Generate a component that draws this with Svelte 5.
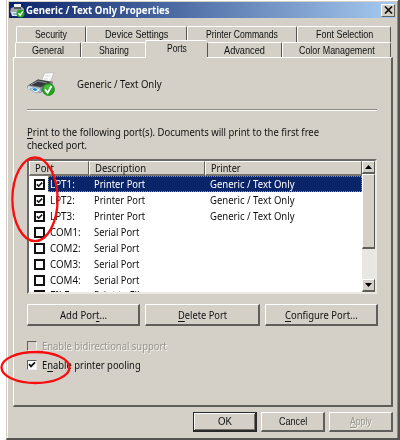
<script>
  const backTabs = [
    { label: 'Security', w: 32, size: 70 },
    { label: 'Device Settings', w: 63, size: 101 },
    { label: 'Printer Commands', w: 72, size: 110 },
    { label: 'Font Selection', w: 57, size: 94 }
  ];
  const frontTabs = [
    { label: 'General', w: 32, size: 66 },
    { label: 'Sharing', w: 30, size: 64 },
    { label: 'Ports', w: 20, size: 62, active: true },
    { label: 'Advanced', w: 41, size: 75 },
    { label: 'Color Management', w: 76, size: 109 }
  ];
  const ports = [
    { name: 'LPT1:', nw: 25, desc: 'Printer Port', dw: 51, printer: 'Generic / Text Only', on: true, selected: true },
    { name: 'LPT2:', nw: 25, desc: 'Printer Port', dw: 51, printer: 'Generic / Text Only', on: true },
    { name: 'LPT3:', nw: 25, desc: 'Printer Port', dw: 51, printer: 'Generic / Text Only', on: true },
    { name: 'COM1:', nw: 31, desc: 'Serial Port', dw: 45 },
    { name: 'COM2:', nw: 31, desc: 'Serial Port', dw: 45 },
    { name: 'COM3:', nw: 31, desc: 'Serial Port', dw: 45 },
    { name: 'COM4:', nw: 31, desc: 'Serial Port', dw: 45 },
    { name: 'FILE:', nw: 22, desc: 'Print to File', dw: 51 }
  ];

  function fit(node, width) {
    node.style.transform = `scaleX(${width / node.offsetWidth})`;
  }
</script>

{#snippet label(text, w, key = -1)}
  <span class="label" style:width="{w}px"><span class="run" use:fit={w}>{#if key >= 0}{text.slice(0, key)}<u>{text[key]}</u>{text.slice(key + 1)}{:else}{text}{/if}</span></span>
{/snippet}

{#snippet printer(size)}
  <svg class="printer" width={size} height={size * 24 / 28} viewBox="0 0 28 24" preserveAspectRatio="none">
    <path d="M14 10 L17.5 1 L27 .5 L23 11Z" fill="#f8f8f7" stroke="#b6b5b3" stroke-width=".7" />
    <path d="M18 4h5M17 7h4" stroke="#deddda" />
    <path d="M0 14 L11 7.5 L26 9.5 L25 16 L13 21 L1 17Z" fill="#85868a" />
    <path d="M2 13 L11 7.5 L24 10 L14 15Z" fill="#34373c" />
    <path d="M4 12.8 L11 9 L20 11" stroke="#96999d" fill="none" />
    <path d="M1 14 L13 16 L14 20 L1 17Z" fill="#d7dce1" />
    <path d="M3 17 L8 15 L14 18 L9 21Z" fill="#edf7ff" stroke="#6288a3" stroke-width=".6" />
    <path d="M5 17l3-1 3 2-3 1z" fill="#1a80c9" />
    <circle cx="21.5" cy="17.5" r="6" fill="#20a51d" stroke="#168313" stroke-width=".7" />
    <path d="M17 15a5 4 0 0 1 9 0Q21 17 17 18Z" fill="#62c957" opacity=".65" />
    <path d="M18 17.3l2.6 3.4 4-6.6" fill="none" stroke="#fff" stroke-width="2" />
  </svg>
{/snippet}

{#snippet miniPrinter()}
  <svg width="15" height="15" viewBox="0 0 15 15">
    <path d="M4 1h7v5H4z" fill="#f2f3f5" />
    <path d="M1 5l3-1h8l2 2v5H2L0 9z" fill="#a5a9ad" />
    <path d="M4 4h7v2H4z" fill="#53575d" />
    <path d="M1 9h8l-1 4H2z" fill="#dce4ec" />
    <path d="M3 11h4" stroke="#478bbd" />
    <circle cx="10.5" cy="10.5" r="4" fill="#20a51d" />
    <path d="M8.4 10.3l1.8 2 2.6-4" fill="none" stroke="#fff" stroke-width="1.4" />
  </svg>
{/snippet}

{#snippet tick()}
  <svg width="8" height="8" viewBox="0 0 8 8"><path d="M1 3.2l2 2.2L7 1.3" fill="none" stroke="#111" stroke-width="1.8" /></svg>
{/snippet}

<main>
  <div class="window">
    <header>
      <span class="mini">{@render miniPrinter()}</span>
      <div class="title">{@render label('Generic / Text Only Properties', 144)}</div>
      <button class="close" aria-label="Close"><svg width="9" height="8" viewBox="0 0 9 8"><path d="M1 .5l7 7M8 .5l-7 7" stroke="#111" stroke-width="1.7" /></svg></button>
    </header>

    <div class="tabs back">
      {#each backTabs as t}<div class="tab" style:width="{t.size}px">{@render label(t.label, t.w)}</div>{/each}
    </div>
    <div class="tabs front">
      {#each frontTabs as t}<div class="tab" class:active={t.active} style:width="{t.size}px">{@render label(t.label, t.w)}</div>{/each}
    </div>

    <section class="page">
      <div class="identity">{@render printer(28)}<div>{@render label('Generic / Text Only', 85)}</div></div>
      <div class="rule"></div>
      <div class="intro">
        <div>{@render label('Print to the following port(s). Documents will print to the first free', 292, 0)}</div>
        <div>{@render label('checked port.', 60)}</div>
      </div>

      <div class="list">
        <div class="content">
          <div class="head">
            <div class="c1">{@render label('Port', 19)}</div>
            <div class="c2">{@render label('Description', 51)}</div>
            <div class="c3">{@render label('Printer', 30)}</div>
          </div>
          {#each ports as p}
            <div class="row">
              <div class="check">{#if p.on}{@render tick()}{/if}</div>
              <div class="cells" class:selected={p.selected}>
                <div class="name">{@render label(p.name, p.nw)}</div>
                <div class="desc">{@render label(p.desc, p.dw)}</div>
                {#if p.printer}<div>{@render label(p.printer, 85)}</div>{/if}
              </div>
            </div>
          {/each}
        </div>
        <div class="scroll">
          <div class="arrow"><svg width="7" height="4"><path d="M0 4L3.5 0 7 4Z" /></svg></div>
          <div class="thumb"></div>
          <div class="track"></div>
          <div class="arrow"><svg width="7" height="4"><path d="M0 0H7L3.5 4Z" /></svg></div>
        </div>
      </div>

      <div class="actions">
        <button style:width="113px">{@render label('Add Port...', 47, 7)}</button>
        <button style:width="115px">{@render label('Delete Port', 49, 0)}</button>
        <button style:width="113px">{@render label('Configure Port...', 73, 0)}</button>
      </div>

      <div class="option disabled"><i></i>{@render label('Enable bidirectional support', 125, 0)}</div>
      <div class="option"><i>{@render tick()}</i>{@render label('Enable printer pooling', 99, 1)}</div>
    </section>

    <footer>
      <button class="default">{@render label('OK', 14)}</button>
      <button>{@render label('Cancel', 28)}</button>
      <button class="disabled">{@render label('Apply', 22, 0)}</button>
    </footer>
  </div>

  <svg class="marks" width="400" height="440" viewBox="0 0 400 440">
    <ellipse cx="35" cy="199.3" rx="22.6" ry="41.8" />
    <ellipse cx="35.5" cy="367.5" rx="34" ry="15.5" />
  </svg>
</main>

<style>
  :global(body) { margin: 0; background: #fff; }
  * { box-sizing: border-box; }
  main { position: relative; width: 400px; height: 440px; padding-left: 6px; overflow: hidden; font: 11px/14px "Noto Sans", "Open Sans", sans-serif; color: #111; }
  .window { width: 394px; height: 440px; background: #d4d0c8; border-left: 1px solid #d4d0c8; border-right: 2px solid #55534f; border-bottom: 2px solid #55534f; padding-top: 2px; box-shadow: inset 1px 1px #fff, inset -1px 0 #8c8983; }
  .label { display: inline-block; flex: none; white-space: nowrap; vertical-align: top; }
  .run { display: inline-block; transform-origin: left; }
  u { text-decoration-thickness: 1px; text-underline-offset: 1.5px; }
  header { height: 16px; margin: 0 2px 0 2px; display: flex; align-items: center; background: linear-gradient(90deg, #0a246a, #a6caf0); color: white; font-weight: bold; font-size: 11px; }
  .mini { display: flex; padding-left: 1px; width: 17px; }
  .title { flex: 1; }
  button { display: flex; align-items: center; justify-content: center; font: inherit; color: inherit; padding: 0; background: #d4d0c8; border: 1px solid #fff; border-right: 2px solid #605e5b; border-bottom: 2px solid #605e5b; }
  .close { width: 14px; height: 13px; margin-right: 1px; border-right-width: 1px; border-bottom-width: 1px; }
  .tabs { display: flex; margin-left: 9px; font: 11px/13px "Liberation Sans", sans-serif; }
  .back { margin-top: 8px; height: 16px; }
  .front { height: 15px; margin-left: 8px; }
  .tab { flex: none; display: flex; justify-content: center; padding-top: 1px; border-top: 1px solid #fff; border-left: 1px solid #fff; border-right: 1.5px solid #575552; border-radius: 2px 2px 0 0; }
  .front .tab:nth-child(2), .tab.active { border-right: 0; }
  .tab.active + .tab { border-left: 1px solid #575552; }
  .tab.active { height: 18px; margin-top: -2px; background: #d4d0c8; position: relative; z-index: 1; }
  .page { width: 380px; height: 350px; margin-left: 6px; padding-left: 13px; border: 1px solid #fff; border-right: 2px solid #605e5b; border-bottom: 2px solid #605e5b; }
  .identity { display: flex; align-items: flex-start; gap: 22px; padding-top: 14px; height: 51px; }
  .identity div { padding-top: 5px; }
  .rule { width: 350px; height: 2px; background: #8d8a84; border-bottom: 1px solid #fff; }
  .intro { padding-top: 14px; line-height: 13px; height: 48px; }
  .intro div { height: 13px; }
  .list { display: flex; width: 350px; height: 135px; background: #fff; border: 2px solid #6b6965; border-right-color: #ece9e2; border-bottom-color: #ece9e2; overflow: hidden; }
  .content { width: 333px; height: 131px; overflow: hidden; }
  .head { display: flex; height: 15px; background: #d4d0c8; }
  .head div { border-top: 1px solid #fff; border-left: 1px solid #fff; border-right: 1px solid #605e5b; border-bottom: 2px solid #77746f; padding-left: 5px; line-height: 12px; }
  .c1 { width: 60px; }
  .c2 { width: 116px; }
  .c3 { flex: 1; }
  .row { height: 16px; display: flex; padding-left: 5px; }
  .check { width: 11px; height: 11px; margin: 3px 3px 0 0; border: 2px solid #111; display: flex; align-items: center; justify-content: center; flex: none; }
  .cells { flex: 1; display: flex; padding-left: 2px; line-height: 16px; }
  .row:last-child .cells { line-height: 13px; }
  .row:last-child .check { margin-top: 2px; }
  .selected { background: #0a246a; color: #fff; outline: 1px dotted #8e967f; outline-offset: -1px; }
  .name { width: 44px; }
  .desc { width: 116px; }
  .scroll { width: 13px; display: flex; flex-direction: column; }
  .arrow, .thumb { background: #d4d0c8; border: 1px solid #fff; border-right-color: #55534f; border-bottom: 2px solid #605e5b; }
  .arrow { height: 13px; display: flex; align-items: center; justify-content: center; }
  .thumb { height: 75px; }
  .track { flex: 1; background: #e9e7e3; }
  .actions { display: flex; gap: 5px; padding-top: 10px; height: 45px; }
  .actions button { height: 22px; }
  .option { height: 19px; display: flex; align-items: flex-start; gap: 5px; }
  i { width: 10px; height: 10px; margin-top: 2px; background: white; border: 1px solid #605e5b; border-right-color: #eee; border-bottom-color: #eee; display: flex; align-items: center; justify-content: center; }
  .disabled { color: #98958e; text-shadow: 1px 1px #f5f3ee; }
  .disabled i { background: #d4d0c8; }
  footer { display: flex; justify-content: flex-end; padding: 5px 5px 0 0; gap: 4px; font: 11px/13px "Liberation Sans", sans-serif; }
  footer button { width: 64px; height: 20px; }
  footer .default { border: 1px solid #292929; border-right-width: 2px; border-bottom-width: 2px; box-shadow: inset 1px 1px white, inset -1px -1px #77746f; }
  .marks { position: absolute; inset: 0; pointer-events: none; }
  ellipse { fill: none; stroke: #f80c0c; stroke-width: 2.3; }
</style>
